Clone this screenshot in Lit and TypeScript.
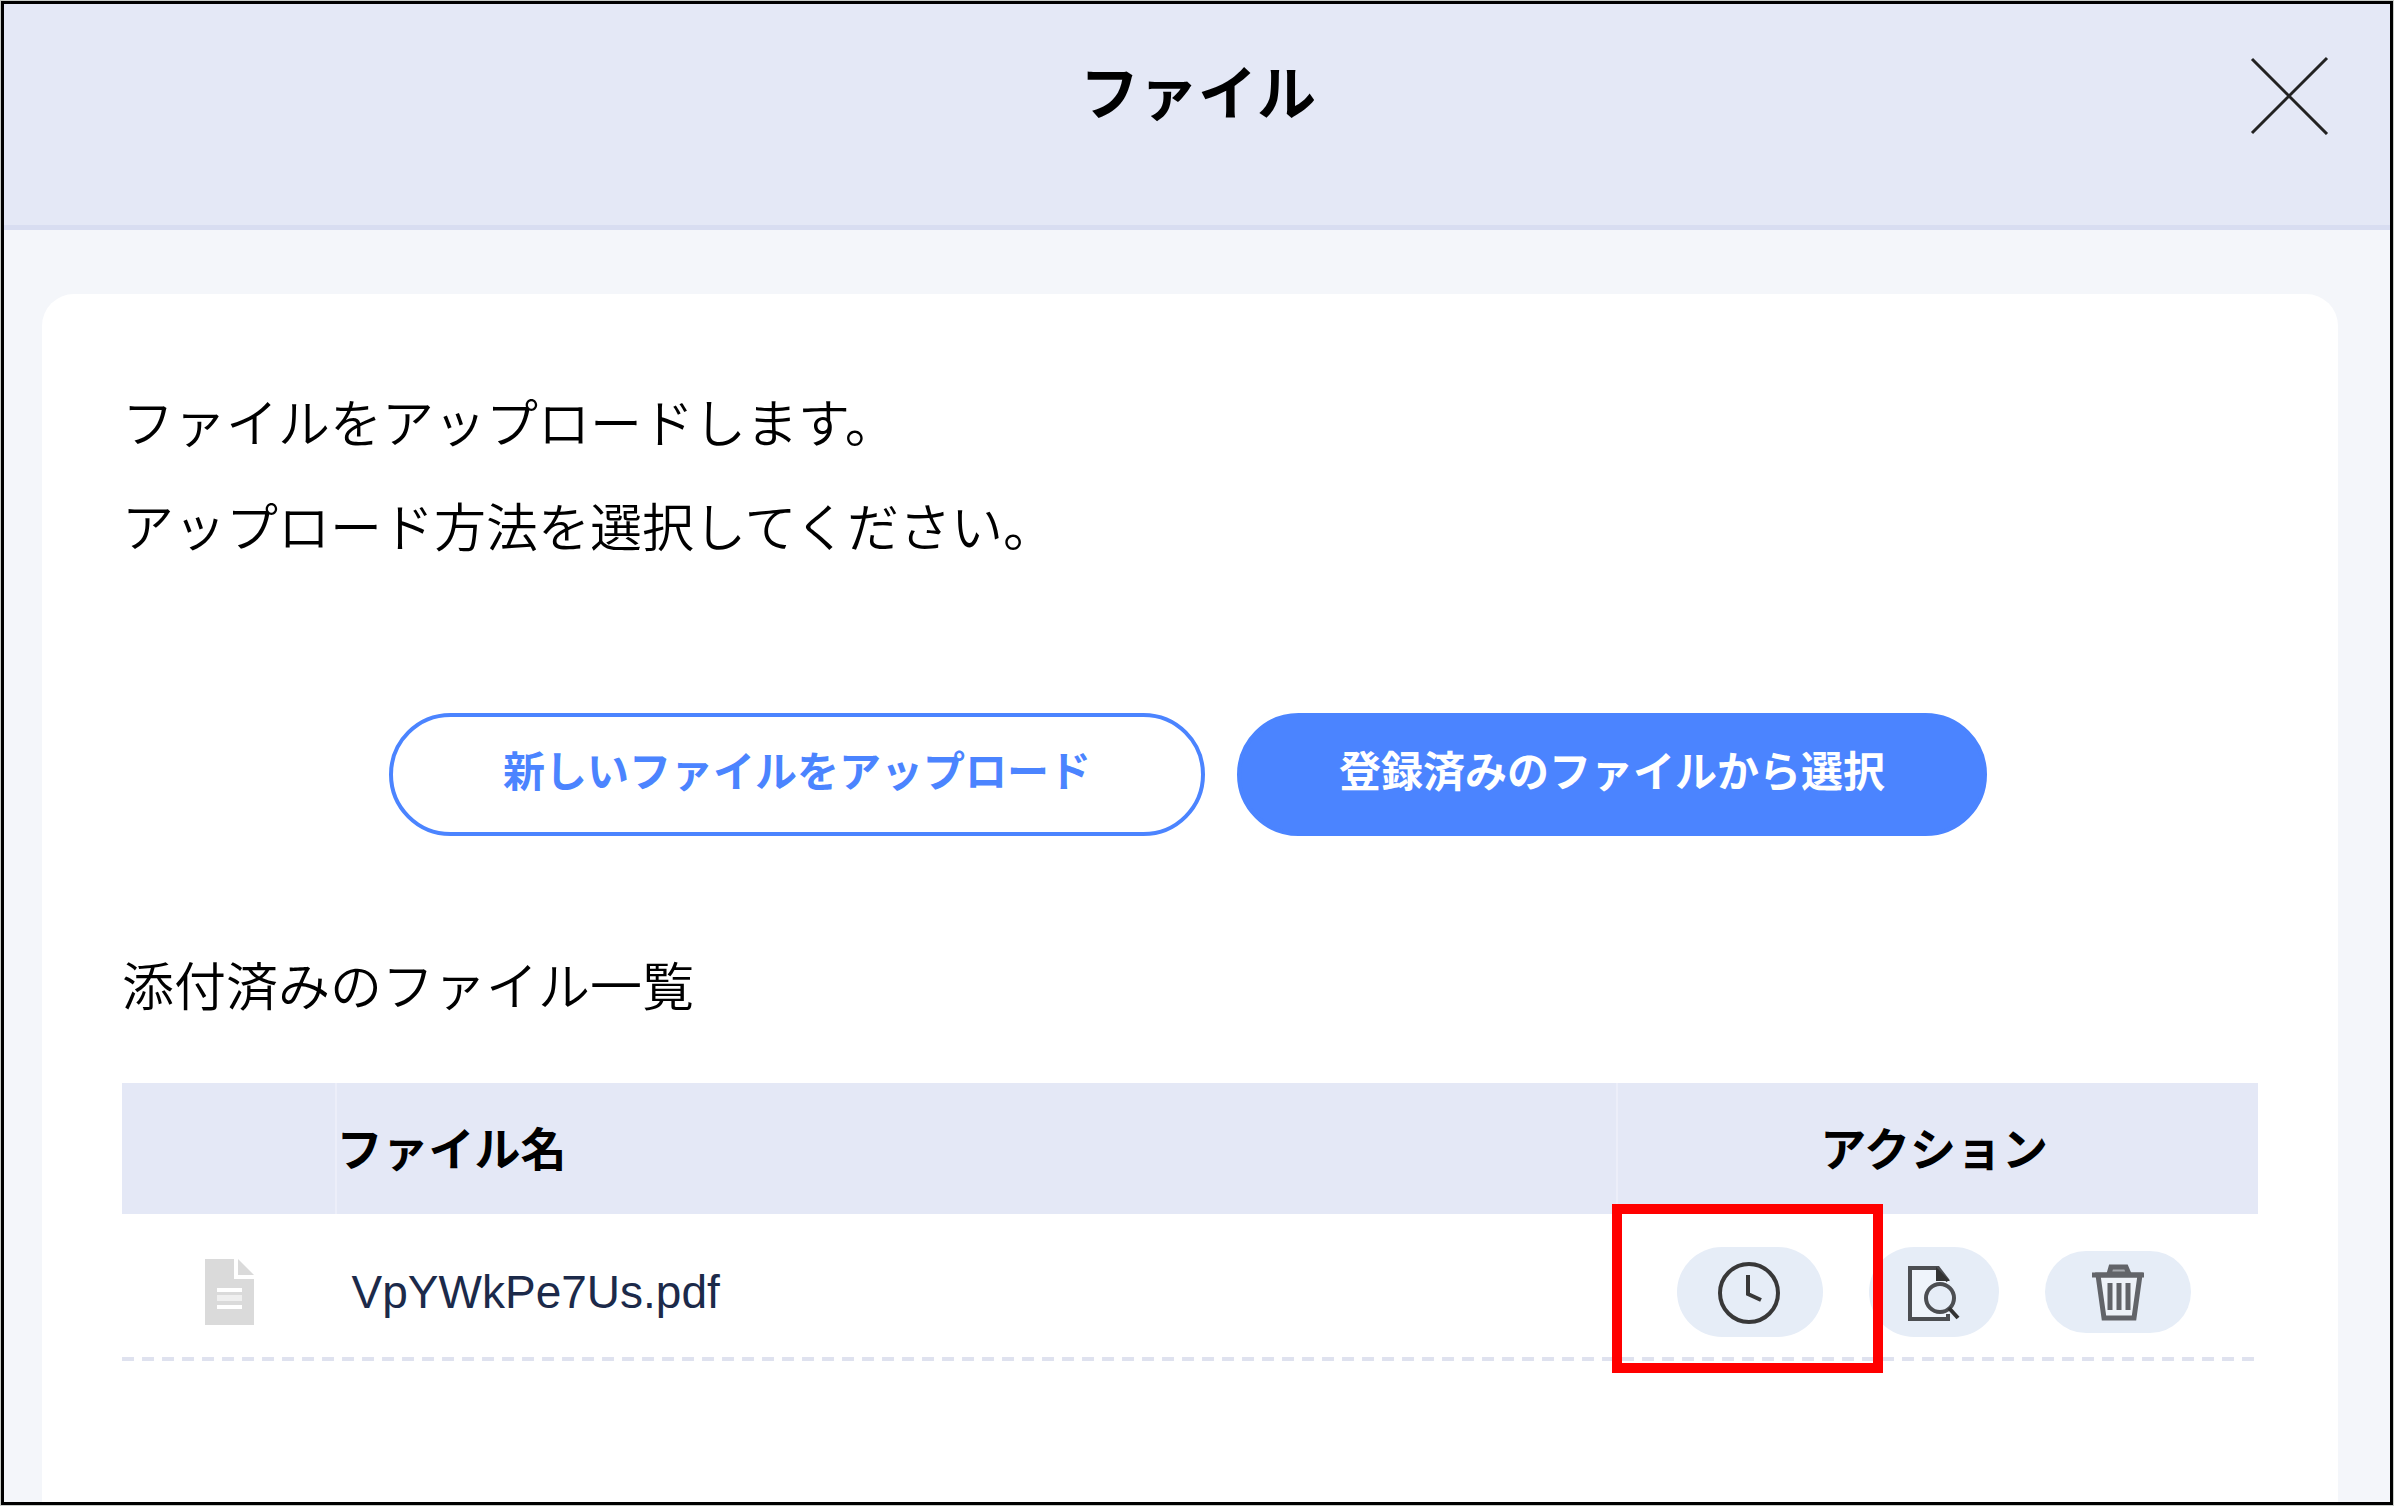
import { LitElement, html, css } from "lit";
import { customElement, state } from "lit/decorators.js";

interface AttachedFile {
  name: string;
}

@customElement("app-root")
export class AppRoot extends LitElement {
  @state() private files: AttachedFile[] = [{ name: "VpYWkPe7Us.pdf" }];

  static styles = css`
    :host {
      display: block;
      box-sizing: border-box;
      min-height: 100vh;
      padding: 1px;
      background: #c9cdc9;
      color: #000;
      font-family: "Noto Sans CJK JP", sans-serif;
    }
    * {
      box-sizing: border-box;
    }
    .dialog {
      display: flex;
      flex-direction: column;
      min-height: calc(100vh - 2px);
      border: 3px solid #000;
      background: #f4f6fa;
    }
    .header {
      display: grid;
      grid-template-columns: 1fr auto 1fr;
      align-items: start;
      height: 226px;
      padding: 41px 56px 0 58px;
      background: #e4e8f6;
      border-bottom: 5px solid #d8ddf1;
    }
    .title {
      grid-column: 2;
      margin: 0;
      font-size: 59px;
      line-height: 90px;
      font-weight: 700;
    }
    .close {
      justify-self: end;
      width: 90px;
      height: 90px;
      padding: 0;
      border: 0;
      background: none;
      cursor: pointer;
    }
    .close svg {
      display: block;
      width: 100%;
      height: 100%;
    }
    .card {
      flex: 1;
      margin: 64px 52px 0 38px;
      padding: 75px 80px 0;
      border-radius: 32px 32px 0 0;
      background: #fff;
    }
    .lead {
      margin: 0;
      font-size: 52px;
      line-height: 104px;
      font-weight: 350;
    }
    .choices {
      display: flex;
      justify-content: center;
      gap: 32px;
      margin-top: 136px;
      padding-right: 4px;
    }
    .pill {
      height: 123px;
      padding: 0 110px 12px;
      border: 4px solid #4b84ff;
      border-radius: 62px;
      background: #fff;
      color: #4b84ff;
      font: inherit;
      font-size: 42px;
      font-weight: 700;
      cursor: pointer;
    }
    .primary {
      padding: 0 98px 12px;
      background: #4b84ff;
      color: #fff;
    }
    .subtitle {
      margin: 96px 0 47px;
      font-size: 52px;
      line-height: 104px;
      font-weight: 350;
    }
    .files {
      width: 100%;
      table-layout: fixed;
      border-collapse: collapse;
    }
    .files th {
      height: 131px;
      padding: 0 0 6px;
      background: #e4e8f6;
      font-size: 46px;
      line-height: 64px;
      text-align: left;
    }
    .files th + th {
      border-left: 2px solid #eceef9;
    }
    .file {
      background: repeating-linear-gradient(to right, #dfe2ef 0 12px, #fff 12px 20px) left bottom / 100% 4px no-repeat;
    }
    .files td {
      height: 147px;
      padding: 8px 0 0;
    }
    .kind {
      width: 10%;
    }
    .ops {
      width: 30%;
    }
    .files .center {
      padding-right: 8px;
      text-align: center;
    }
    .doc {
      display: block;
      width: 52px;
      height: 68px;
      margin: 0 auto;
    }
    .files .name {
      padding-left: 16px;
      color: #1c2a4a;
      font-family: "Liberation Sans", sans-serif;
      font-size: 46px;
    }
    .actions {
      display: flex;
      align-items: center;
      justify-content: center;
      gap: 46px;
    }
    .marked {
      position: relative;
      display: flex;
    }
    .marker {
      position: absolute;
      inset: -43px -60px -36px -65px;
      border: 10px solid #f00;
      pointer-events: none;
    }
    .action {
      display: grid;
      place-items: center;
      width: 146px;
      height: 90px;
      padding: 0;
      border: 0;
      border-radius: 45px;
      background: #e6edf7;
      cursor: pointer;
    }
    .narrow {
      width: 130px;
    }
    .short {
      height: 82px;
    }
    .action svg {
      display: block;
      width: 64px;
      height: 64px;
    }
  `;

  private remove(file: AttachedFile) {
    this.files = this.files.filter((f) => f !== file);
  }

  private row(file: AttachedFile) {
    return html`
      <tr class="file">
        <td>
          <svg class="doc" viewBox="0 0 52 68" aria-hidden="true">
            <path d="M2 1h29v20h20v46H2z" fill="#dadada" />
            <path d="M35 1v16h16z" fill="#dadada" />
            <path d="M14 32h25M14 49h25" stroke="#fff" stroke-width="4" />
            <path d="M14 40h25" stroke="#efefef" stroke-width="6" />
          </svg>
        </td>
        <td class="name">${file.name}</td>
        <td class="center">
          <div class="actions">
            <span class="marked">
              <button class="action" aria-label="履歴">
                <svg viewBox="0 0 64 64" fill="none" stroke="#383838" stroke-width="4">
                  <circle cx="31" cy="33" r="29" />
                  <path d="M30 15v19l13 6" />
                </svg>
              </button>
              <span class="marker"></span>
            </span>
            <button class="action narrow" aria-label="プレビュー">
              <svg viewBox="0 0 64 64" fill="none" stroke="#4c4e52" stroke-width="4">
                <path d="M46 59H8V8h28l11 13v38z" fill="#eff4fb" stroke="none" />
                <path d="M46 54v5H8V8h28l10 13" />
                <path d="M34 7v14h14z" fill="#333" stroke="none" />
                <circle cx="38" cy="38" r="14" fill="#e6edf7" />
                <path d="M47 48l9 10" stroke="#333" />
              </svg>
            </button>
            <button class="action short" aria-label="削除" @click=${() => this.remove(file)}>
              <svg viewBox="0 0 64 64" fill="none" stroke="#626469" stroke-width="5">
                <path d="M12 15l6 43h30l6-43z" fill="#eef2f8" />
                <path d="M23 14l2-7h15l3 7z" fill="#a5a8ae" />
                <path d="M6 15h52" />
                <path d="M24 23v27M33 23v27M42 23v27" />
              </svg>
            </button>
          </div>
        </td>
      </tr>
    `;
  }

  render() {
    return html`
      <main class="dialog">
        <header class="header">
          <h1 class="title">ファイル</h1>
          <button class="close" aria-label="閉じる">
            <svg viewBox="0 0 90 90" stroke="#222" stroke-width="3">
              <path d="M8 14L83 89M8 88L83 13" />
            </svg>
          </button>
        </header>
        <section class="card">
          <p class="lead">ファイルをアップロードします。</p>
          <p class="lead">アップロード方法を選択してください。</p>
          <div class="choices">
            <button class="pill">新しいファイルをアップロード</button>
            <button class="pill primary">登録済みのファイルから選択</button>
          </div>
          <h2 class="subtitle">添付済みのファイル一覧</h2>
          <table class="files">
            <thead>
              <tr>
                <th class="kind"></th>
                <th>ファイル名</th>
                <th class="ops center">アクション</th>
              </tr>
            </thead>
            <tbody>
              ${this.files.map((file) => this.row(file))}
            </tbody>
          </table>
        </section>
      </main>
    `;
  }
}
